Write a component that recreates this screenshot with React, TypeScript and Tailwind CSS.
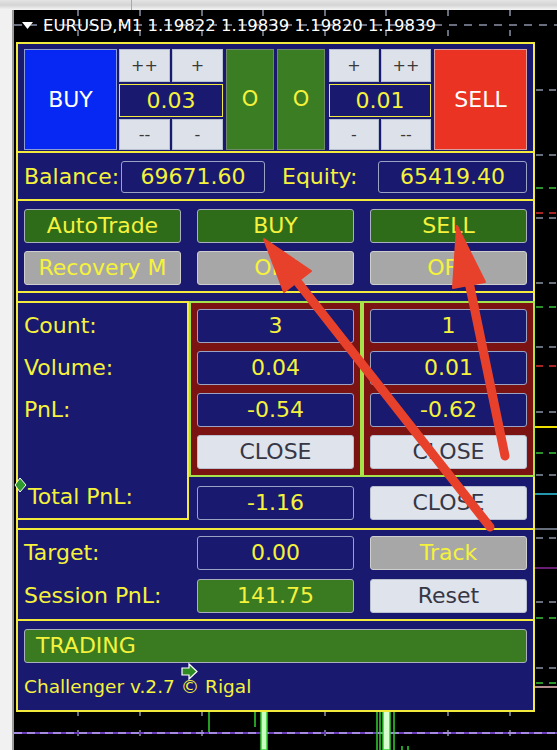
import React from "react";

const YELLOW = "#f5f23c";

type Tone = "navy" | "gray" | "green" | "lime" | "off";

const toneClass: Record<Tone, string> = {
  navy: "bg-[#191970] border-[#9aa3c4] text-[#f5f23c]",
  gray: "bg-[#dfe3ec] border-[#b9c1d1] text-[#363645]",
  green: "bg-[#2f6c19] border-[#a9afbd] text-[#f5f23c]",
  lime: "bg-[#3a7b22] border-[#a9afbd] text-[#f5f23c]",
  off: "bg-[#a7a7a7] border-[#cfcfcf] text-[#f5f23c]",
};

function Box({
  children,
  tone = "navy",
  className = "",
}: {
  children?: React.ReactNode;
  tone?: Tone;
  className?: string;
}) {
  return (
    <div
      className={`flex items-center justify-center rounded-[3px] border-[1.5px] text-[22px] leading-none whitespace-nowrap overflow-hidden ${toneClass[tone]} ${className}`}
    >
      {children}
    </div>
  );
}

function StepCell({ label }: { label: string }) {
  return (
    <div className="flex flex-1 items-center justify-center border border-[#b5c0d0] bg-[#dde1ea] text-[16px] leading-none text-[#3b3838]">
      {label}
    </div>
  );
}

function LotControl({ value, top, bottom, className = "" }: { value: string; top: [string, string]; bottom: [string, string]; className?: string }) {
  return (
    <div className={`flex flex-col ${className}`}>
      <div className="flex h-[33px] gap-[2px]">
        <StepCell label={top[0]} />
        <StepCell label={top[1]} />
      </div>
      <div className="mt-[2px] flex h-[33px] items-center justify-center border-[1.5px] border-[#f2ea3c] bg-[#191970] text-[22px] leading-none text-[#f5f23c]">
        {value}
      </div>
      <div className="mt-[2px] flex h-[31px] gap-[2px]">
        <StepCell label={bottom[0]} />
        <StepCell label={bottom[1]} />
      </div>
    </div>
  );
}

function Label({ children, className = "" }: { children: React.ReactNode; className?: string }) {
  return (
    <div className={`flex items-center text-[22px] leading-none text-[#f5f23c] whitespace-nowrap ${className}`}>
      {children}
    </div>
  );
}

function SideColumn({ values }: { values: string[] }) {
  return (
    <div className="flex w-[173px] flex-col gap-[8px] border-2 border-[#a6e34a] bg-[#7b1313] px-[6px] pt-[6px]">
      {values.map((v) => (
        <Box key={v} className="h-[34px] w-full">
          {v}
        </Box>
      ))}
      <Box tone="gray" className="h-[34px] w-full">
        CLOSE
      </Box>
    </div>
  );
}

function ChartCanvas() {
  const vx = [64, 126, 188, 249, 311, 372, 434, 496];
  const grayDash = [80, 145, 208, 273, 337, 402, 465, 528, 592, 658];
  const greenDash = [178, 297, 443, 608, 673];
  const redDash = [203, 356];
  return (
    <svg className="absolute left-0 top-0" width={543} height={740} viewBox="0 0 543 740">
      {vx.map((x) => (
        <line key={x} x1={x} y1={0} x2={x} y2={740} stroke="#8a92a6" strokeWidth={1.5} strokeDasharray="6 14" />
      ))}
      <line x1={0} y1={15} x2={543} y2={15} stroke="#8a92a6" strokeWidth={1.5} strokeDasharray="8 7" />
      {grayDash.map((y) => (
        <line key={`g${y}`} x1={522} y1={y} x2={543} y2={y} stroke="#8a94a6" strokeWidth={1.5} strokeDasharray="7 6" />
      ))}
      {greenDash.map((y) => (
        <line key={`n${y}`} x1={522} y1={y} x2={543} y2={y} stroke="#3cc23c" strokeWidth={1.5} strokeDasharray="7 6" />
      ))}
      {redDash.map((y) => (
        <line key={`r${y}`} x1={522} y1={y} x2={543} y2={y} stroke="#e03030" strokeWidth={1.5} strokeDasharray="7 6" />
      ))}
      <line x1={520} y1={417} x2={543} y2={417} stroke="#f0e000" strokeWidth={2} />
      <line x1={520} y1={484} x2={543} y2={484} stroke="#30c8e8" strokeWidth={1.5} />
      <line x1={520} y1={519} x2={543} y2={519} stroke="#8a94a6" strokeWidth={1.5} />
      <line x1={520} y1={558} x2={543} y2={558} stroke="#8a2a9a" strokeWidth={1.5} />
      <line x1={520} y1={677} x2={543} y2={677} stroke="#f0c0c0" strokeWidth={1.5} />
      {/* price line under the panel */}
      <line x1={0} y1={723} x2={543} y2={723} stroke="#6a3ab8" strokeWidth={2} />
      <line x1={0} y1={723} x2={543} y2={723} stroke="#a58be0" strokeWidth={2} strokeDasharray="8 5" />
      {/* candles */}
      <line x1={195} y1={700} x2={195} y2={722} stroke="#30d030" strokeWidth={1.5} />
      <line x1={241} y1={700} x2={241} y2={717} stroke="#30d030" strokeWidth={1.5} />
      <rect x={247} y={700} width={6} height={40} fill="#c8ffc0" stroke="#30d030" strokeWidth={1.5} />
      <line x1={363} y1={700} x2={363} y2={740} stroke="#30d030" strokeWidth={1.5} />
      <line x1={366} y1={700} x2={366} y2={740} stroke="#30d030" strokeWidth={1.5} />
      <rect x={369} y={700} width={7} height={40} fill="#d8ffd0" stroke="#30d030" strokeWidth={1.5} />
      <line x1={380} y1={700} x2={380} y2={740} stroke="#30d030" strokeWidth={1.5} />
      <line x1={388} y1={736} x2={388} y2={740} stroke="#30d030" strokeWidth={1.5} />
      <line x1={394} y1={736} x2={394} y2={740} stroke="#30d030" strokeWidth={1.5} />
    </svg>
  );
}

function Overlay() {
  return (
    <svg className="pointer-events-none absolute left-0 top-0 z-20" width={557} height={750} viewBox="0 0 557 750">
      {/* chart markers */}
      <polygon points="15,485 20,478 26,485 20,492" fill="#2e9a2e" stroke="#ffffff" strokeWidth={1} />
      <polygon points="182,668 189,668 189,664 197,671.5 189,679 189,675 182,675" fill="#2e8a22" stroke="#ffffff" strokeWidth={1.2} />
      {/* annotation arrows */}
      <g fill="#e8412b" stroke="#e8412b" strokeLinecap="round" strokeLinejoin="round">
        <line x1={296} y1={280} x2={490} y2={527} strokeWidth={9} />
        <polygon points="264,239 284,292 311,271" strokeWidth={2} />
        <line x1={469} y1={282} x2={505} y2={456} strokeWidth={9} />
        <polygon points="457,226 453,288 485,282" strokeWidth={2} />
      </g>
    </svg>
  );
}

export default function App() {
  return (
    <div className="relative flex h-[750px] w-[557px] flex-col overflow-hidden bg-black font-['DejaVu_Sans',sans-serif]">
      {/* window chrome */}
      <div className="flex h-[10px] shrink-0 bg-gradient-to-b from-[#e4e4e4] via-[#d4d4d4] to-[#f6f6f6]">
        <div className="w-[132px] border-r border-[#a8a8a8]" />
      </div>
      <div className="flex flex-1">
        <div className="w-[14px] shrink-0 border-r-2 border-[#9c9c9c] bg-[#f1f1f1]" />
        <div className="relative flex-1 bg-black">
          <ChartCanvas />
          <div className="relative z-10 flex h-[32px] items-center pl-[8px] text-[16.5px] leading-none text-white">
            <svg width={11} height={8} viewBox="0 0 11 8">
              <polygon points="0,0 11,0 5.5,7" fill="#ffffff" />
            </svg>
            <span className="ml-[10px] whitespace-nowrap">EURUSD,M1 1.19822 1.19839 1.19820 1.19839</span>
          </div>

          {/* trading panel */}
          <div className="relative z-10 ml-[2px] flex h-[670px] w-[519px] flex-col border-2 border-[#f2ea3c] bg-[#191970]">
            {/* order buttons */}
            <div className="flex h-[107px] px-[6px] pt-[5px] pb-[1px]">
              <div className="flex w-[93px] items-center justify-center border-[1.5px] border-[#8c9cd6] bg-[#0628f2] text-[22px] leading-none text-white">
                BUY
              </div>
              <LotControl className="ml-[2px] w-[104px]" value="0.03" top={["++", "+"]} bottom={["--", "-"]} />
              <div className="ml-[3px] flex w-[48px] items-center justify-center border border-[#6f8a66] bg-[#3a7d22] text-[21px] leading-none text-[#f5f23c]">
                O
              </div>
              <div className="ml-[3px] flex w-[48px] items-center justify-center border border-[#6f8a66] bg-[#3a7d22] text-[21px] leading-none text-[#f5f23c]">
                O
              </div>
              <LotControl className="ml-[4px] w-[102px]" value="0.01" top={["+", "++"]} bottom={["-", "--"]} />
              <div className="ml-[3px] flex w-[93px] items-center justify-center border-[1.5px] border-[#d8a0a0] bg-[#ea3323] text-[22px] leading-none text-white">
                SELL
              </div>
            </div>

            {/* account */}
            <div className="flex h-[48px] items-start border-t-2 border-[#f2ea3c] pl-[6px] pt-[8px]">
              <Label className="h-[32px] w-[97px]">Balance:</Label>
              <Box className="h-[32px] w-[144px]">69671.60</Box>
              <Label className="ml-[17px] h-[32px] w-[96px]">Equity:</Label>
              <Box className="h-[32px] w-[149px]">65419.40</Box>
            </div>

            {/* automation */}
            <div className="grid h-[92px] grid-cols-[157px_157px_157px] content-start gap-x-[16px] gap-y-[8px] border-t-2 border-[#f2ea3c] pl-[6px] pt-[8px]">
              <Box tone="green" className="h-[34px]">AutoTrade</Box>
              <Box tone="green" className="h-[34px]">BUY</Box>
              <Box tone="green" className="h-[34px]">SELL</Box>
              <Box tone="off" className="h-[34px]">Recovery M</Box>
              <Box tone="off" className="h-[34px]">OFF</Box>
              <Box tone="off" className="h-[34px]">OFF</Box>
            </div>

            {/* positions */}
            <div className="h-[237px] border-t-2 border-[#f2ea3c] pt-[8px]">
              <div className="-mx-[2px] flex h-[219px]">
                <div className="flex w-[173px] flex-col gap-[8px] border-2 border-[#f2ea3c] pb-[8px] pl-[6px] pt-[6px]">
                  <Label className="h-[34px]">Count:</Label>
                  <Label className="h-[34px]">Volume:</Label>
                  <Label className="h-[34px]">PnL:</Label>
                  <Label className="mt-auto h-[26px] pl-[4px]">Total PnL:</Label>
                </div>
                <div className="flex w-[346px] flex-col">
                  <div className="flex h-[176px]">
                    <SideColumn values={["3", "0.04", "-0.54"]} />
                    <SideColumn values={["1", "0.01", "-0.62"]} />
                  </div>
                  <div className="mt-[9px] flex h-[34px] pl-[8px]">
                    <Box className="h-[34px] w-[157px]">-1.16</Box>
                    <Box tone="gray" className="ml-[16px] h-[34px] w-[157px]">CLOSE</Box>
                  </div>
                </div>
              </div>
            </div>

            {/* session */}
            <div className="flex h-[91px] flex-col gap-[9px] border-t-2 border-[#f2ea3c] pl-[6px] pt-[6px]">
              <div className="flex h-[34px]">
                <Label className="w-[173px]">Target:</Label>
                <Box className="w-[157px]">0.00</Box>
                <Box tone="off" className="ml-[16px] w-[157px]">Track</Box>
              </div>
              <div className="flex h-[34px]">
                <Label className="w-[173px]">Session PnL:</Label>
                <Box tone="lime" className="w-[157px]">141.75</Box>
                <Box tone="gray" className="ml-[16px] w-[157px]">Reset</Box>
              </div>
            </div>

            {/* status */}
            <div className="flex h-[91px] flex-col border-t-2 border-[#f2ea3c] px-[6px] pt-[8px]">
              <Box tone="lime" className="h-[34px] justify-start pl-[11px]">TRADING</Box>
              <div className="mt-[15px] text-[18.5px] leading-none whitespace-nowrap" style={{ color: YELLOW }}>
                Challenger v.2.7 © Rigal
              </div>
            </div>
          </div>
        </div>
      </div>
      <Overlay />
    </div>
  );
}
